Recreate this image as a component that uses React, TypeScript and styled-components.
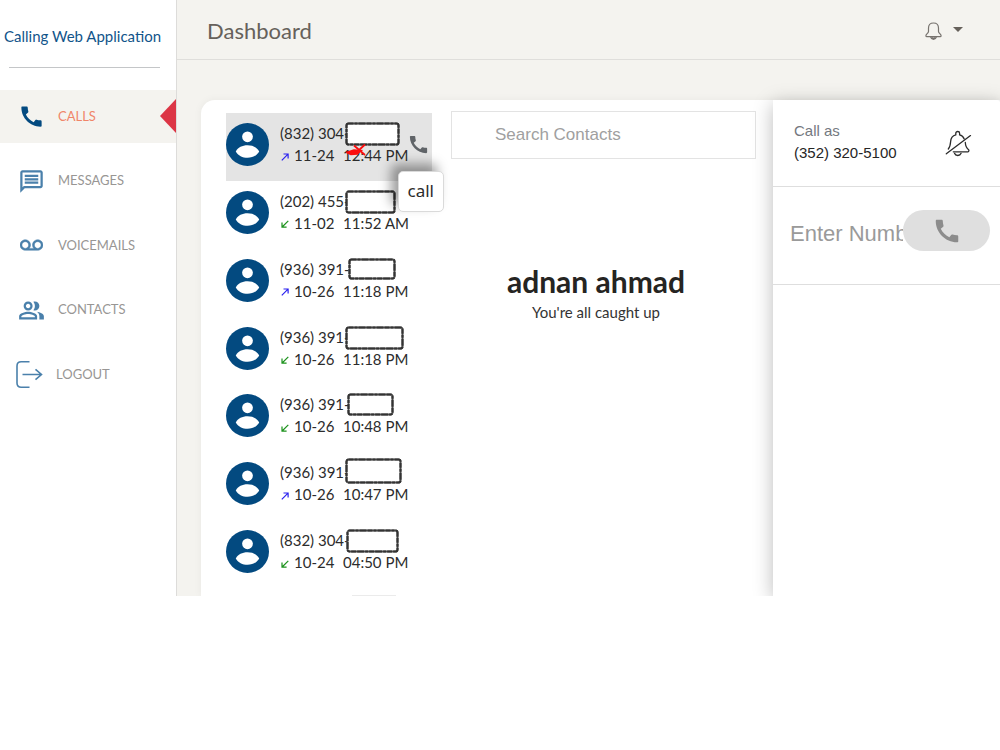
import React from "react";
import styled, { createGlobalStyle } from "styled-components";

const GlobalStyle = createGlobalStyle`
  *, *::before, *::after { box-sizing: border-box; }
  body {
    margin: 0;
    background: #fff;
    color: #252422;
    font-family: Lato, "Liberation Sans", sans-serif;
    font-size: 15px;
  }
  h1, h2, p, ul { margin: 0; padding: 0; }
  ul { list-style: none; }
  svg { display: block; flex-shrink: 0; }
  button, input { font: inherit; border: 0; padding: 0; margin: 0; background: none; }
`;

const Shell = styled.div`
  display: flex;
`;

const Sidebar = styled.aside`
  width: 177px;
  flex-shrink: 0;
  border-right: 1px solid #dddcda;
`;

const Brand = styled.a`
  display: block;
  padding: 24px 0 0 4px;
  height: 67px;
  line-height: 24px;
  color: #11548a;
  text-decoration: none;
  white-space: nowrap;
`;

const Divider = styled.div`
  height: 1px;
  margin: 0 16px 22px 9px;
  background: #c4c6c8;
`;

const Nav = styled.nav`
  display: flex;
  flex-direction: column;
  justify-content: space-between;
  height: 311px;
`;

const NavLink = styled.a<{ $active?: boolean; $wide?: boolean }>`
  position: relative;
  display: flex;
  align-items: center;
  gap: ${(p) => (p.$wide ? 12 : 14)}px;
  height: 53px;
  padding-left: ${(p) => (p.$wide ? 15 : 18)}px;
  background: ${(p) => (p.$active ? "#f4f3ef" : "transparent")};
  color: ${(p) => (p.$active ? "#f08568" : "#989694")};
  font-size: 13px;
  line-height: 20px;
  text-decoration: none;

  svg {
    color: ${(p) => (p.$active ? "#034a80" : "#4a80ab")};
  }

  &::after {
    content: "";
    display: ${(p) => (p.$active ? "block" : "none")};
    position: absolute;
    right: 0;
    top: 9px;
    border: 17px solid transparent;
    border-left-width: 0;
    border-right: 16px solid #dc3545;
  }
`;

const NavIcon = styled.span`
  display: flex;
  justify-content: center;
  width: 26px;
`;

const NavLabel = styled.span`
  padding-bottom: 2px;
`;

const Content = styled.div`
  flex: 1;
  min-width: 0;
  background: #f4f3ef;
  overflow: hidden;
`;

const TopBar = styled.header`
  display: flex;
  align-items: center;
  justify-content: space-between;
  height: 60px;
  padding: 2px 37px 0 30px;
  border-bottom: 1px solid #dfdedb;
`;

const PageTitle = styled.h1`
  font-size: 22px;
  font-weight: 400;
  line-height: 30px;
  color: #66615b;
`;

const AlertsButton = styled.button`
  display: flex;
  align-items: center;
  gap: 11px;
  color: #66615b;
`;

const Caret = styled.span`
  margin-bottom: 2px;
  border: 5px solid transparent;
  border-top-color: #66615b;
  border-bottom-width: 0;
`;

const Card = styled.main`
  display: flex;
  margin: 40px 0 0 24px;
  background: #fff;
  border-radius: 14px 0 0 0;
  box-shadow: 0 0 8px rgba(0, 0, 0, 0.05);
`;

const CallColumn = styled.section`
  width: 250px;
  flex-shrink: 0;
  padding: 13px 19px 0 25px;
`;

const CallList = styled.ul`
  display: flex;
  flex-direction: column;
  height: 475px;
`;

const CallRow = styled.li<{ $selected?: boolean }>`
  position: relative;
  flex: 1;
  display: flex;
  align-items: flex-start;
  gap: 11px;
  padding-top: 10px;
  background: ${(p) => (p.$selected ? "#e4e4e4" : "transparent")};
`;

const CallText = styled.div`
  position: relative;
  line-height: 22px;
  margin-top: -1px;
  white-space: pre;
  color: #2c2c2c;
`;

const CallMeta = styled.p`
  display: flex;
  align-items: center;

  svg { margin: 3px 5px 0 1px; }
  time { width: 49px; }
`;

const Redaction = styled.svg<{ $x: number; $y: number }>`
  position: absolute;
  left: ${(p) => p.$x}px;
  top: ${(p) => p.$y}px;
`;

const Scribble = styled.svg`
  position: absolute;
  left: 66px;
  top: 21px;
`;

const RowCallButton = styled.button`
  position: absolute;
  right: 2px;
  top: 20px;
  color: #606468;
`;

const Tooltip = styled.span`
  position: absolute;
  z-index: 2;
  right: -12px;
  top: 58px;
  padding: 5px 9px 6px;
  background: #fff;
  border: 1px solid #dadada;
  border-radius: 5px;
  box-shadow: -7px -7px 12px rgba(0, 0, 0, 0.38);
  color: #2b2b2b;
  font-family: "Noto Sans", sans-serif;
  font-size: 17px;
  line-height: 28px;
`;

const NextRowEdge = styled.div`
  height: 1px;
  width: 44px;
  margin: 7px 0 0 126px;
  background: #ebebeb;
`;

const Center = styled.section`
  flex: 1;
  min-width: 0;
  padding: 11px 17px 0 0;
  text-align: center;
`;

const SearchInput = styled.input`
  display: block;
  width: 100%;
  height: 48px;
  padding-left: 43px;
  border: 1px solid #e3e3e3;
  background: #fff;
  font-family: "Liberation Sans", Arial, sans-serif;
  font-size: 17px;

  &::placeholder { color: #a0a0a0; opacity: 1; }
`;

const UserProfile = styled.div`
  padding: 103px 15px 0 0;
`;

const UserName = styled.h2`
  font-size: 30px;
  line-height: 38px;
  font-weight: 700;
`;

const Caption = styled.p`
  margin-top: 1px;
  line-height: 22px;
  color: #333;
`;

const Dialer = styled.section`
  width: 227px;
  flex-shrink: 0;
  background: #fff;
  box-shadow: 0 4px 20px rgba(0, 0, 0, 0.27);
  border-top-right-radius: 3px;
  font-family: "Liberation Sans", Arial, sans-serif;
`;

const CallerBar = styled.div`
  display: flex;
  align-items: center;
  justify-content: space-between;
  height: 87px;
  padding: 0 28px 0 21px;
  border-bottom: 1px solid #dedede;
  line-height: 22px;
`;

const CallerText = styled.div`
  padding-bottom: 2px;
`;

const CallerLabel = styled.p`
  color: #747880;
`;

const CallerNumber = styled.p`
  color: #262626;
`;

const DialForm = styled.form`
  display: flex;
  align-items: center;
  height: 98px;
  padding: 0 10px 10px 17px;
  border-bottom: 1px solid #dedede;
`;

const NumberInput = styled.input`
  flex: 1;
  min-width: 0;
  height: 40px;
  margin-top: 7px;
  font-size: 22px;

  &::placeholder { color: #9a9a9a; opacity: 1; }
`;

const DialButton = styled.button`
  display: flex;
  align-items: center;
  justify-content: center;
  width: 87px;
  height: 41px;
  border-radius: 21px;
  background: #dfdfdf;
  color: #8c8c8c;
`;

const Phone = ({ size }: { size: number }) => (
  <svg width={size} height={size} viewBox="0 0 24 24" fill="currentColor" aria-hidden="true">
    <path d="M20.01 15.38c-1.23 0-2.42-.2-3.53-.56a.977.977 0 0 0-1.01.24l-1.57 1.97c-2.83-1.35-5.48-3.9-6.89-6.83l1.95-1.66c.27-.28.35-.67.24-1.02-.37-1.110-.56-2.300-.56-3.530 0-.54-.45-.99-.99-.99H3.800c-.5 0-.8.300-.8.990C3 13.280 10.730 21 20.010 21c.710 0 .990-.300.990-.800v-3.830c0-.54-.45-.99-.99-.99z" />
  </svg>
);

const MessageIcon = () => (
  <svg width="27" height="27" viewBox="0 0 24 24" fill="currentColor" aria-hidden="true">
    <path d="M4 4h16v12H5.17L4 17.17V4m0-2c-1.1 0-1.99.9-1.99 2L2 22l4-4h14c1.1 0 2-.9 2-2V4c0-1.1-.9-2-2-2H4zm2 10h12v2H6v-2zm0-3h12v2H6V9zm0-3h12v2H6V6z" />
  </svg>
);

const VoicemailIcon = () => (
  <svg width="23" height="23" viewBox="0 0 24 24" fill="currentColor" stroke="currentColor" strokeWidth="0.5" aria-hidden="true">
    <path d="M18.5 6C15.46 6 13 8.46 13 11.5c0 1.33.47 2.55 1.26 3.5H9.74c.79-.95 1.26-2.17 1.26-3.5C11 8.46 8.54 6 5.5 6S0 8.46 0 11.5 2.46 17 5.5 17h13c3.04 0 5.5-2.46 5.5-5.5S21.54 6 18.5 6zm-13 9C3.57 15 2 13.43 2 11.5S3.57 8 5.5 8 9 9.57 9 11.5 7.43 15 5.5 15zm13 0c-1.93 0-3.5-1.57-3.5-3.5S16.57 8 18.5 8 22 9.57 22 11.5 20.43 15 18.5 15z" />
  </svg>
);

const ContactsIcon = () => (
  <svg width="27" height="27" viewBox="0 0 24 24" fill="currentColor" aria-hidden="true">
    <path d="M16.67 13.13C18.04 14.06 19 15.32 19 17v3h4v-3c0-2.18-3.57-3.47-6.33-3.87z" />
    <path d="M15 12c2.21 0 4-1.79 4-4s-1.79-4-4-4c-.47 0-.91.1-1.33.24C14.5 5.27 15 6.58 15 8s-.5 2.73-1.33 3.76c.42.14.86.24 1.33.24z" />
    <path d="M9 12c2.21 0 4-1.79 4-4s-1.79-4-4-4-4 1.79-4 4 1.79 4 4 4zm0-6c1.1 0 2 .9 2 2s-.9 2-2 2-2-.9-2-2 .9-2 2-2zM9 13c-2.67 0-8 1.34-8 4v3h16v-3c0-2.66-5.33-4-8-4zm6 5H3v-.99C3.2 16.29 6.3 15 9 15s5.8 1.29 6 2v1z" />
  </svg>
);

const LogoutIcon = () => (
  <svg width="29" height="29" viewBox="0 0 29 29" fill="none" stroke="currentColor" strokeWidth="1.6" aria-hidden="true">
    <path d="M14.5 1.8H6.2c-2.5 0-4.2 1.8-4.2 4.2v17c0 2.4 1.7 4.2 4.2 4.2h8.3M7.5 14.500h18.7M20.5 9.300l6 5.200-6 5.200" />
  </svg>
);

const BellIcon = () => (
  <svg width="17" height="18" viewBox="0 0 17 18" fill="none" stroke="#77736f" strokeWidth="1.2" aria-hidden="true">
    <path d="M8.5 1C5.3 1 3.500 3.300 3.500 6v3.500c0 1.700-2.600 2.600-2.600 4.200 0 .6.400.9 1 .9h13.200c.6 0 1-.3 1-.9 0-1.600-2.600-2.500-2.600-4.200V6c0-2.700-1.800-5-5-5z" />
    <path d="M5.600 15c.5 1.500 1.500 2.300 2.900 2.300s2.400-.8 2.900-2.300M7 15.200c.3.600.8.900 1.500.9s1.200-.3 1.500-.9" />
  </svg>
);

const MutedBellIcon = () => (
  <svg width="27" height="28" viewBox="0 0 27 28" fill="none" stroke="#2b2b2b" strokeWidth="1.3" strokeLinecap="round" aria-hidden="true">
    <path d="M3.300 20c1.800-2 2.100-4.400 2.300-7.300.2-3.600 2.100-6.200 5.200-6.900V4.200c0-1 .8-1.700 1.900-1.700s1.900.7 1.900 1.700v1.600c2.200.5 3.800 2 4.600 4.100M20.300 13.500c.2 3.300.8 5.300 3.300 7.200.6.500.3 2.100-.6 2.100H8.300" />
    <path d="M9.500 24.300c.5 1.400 1.700 2.200 3.300 2.200s2.700-.8 3.300-2.200M1.300 24.800 25.500 6.600" />
  </svg>
);

const Avatar = () => (
  <svg width="43" height="43" viewBox="2 2 20 20" aria-hidden="true">
    <circle cx="12" cy="12" r="10" fill="#034a80" />
    <circle cx="12" cy="8.4" r="2.5" fill="#fff" />
    <path d="M6.550 15.200C7.500 13.400 9.600 12.400 12 12.400s4.500 1 5.450 2.800C16.400 17.100 14.300 18.150 12 18.150S7.600 17.100 6.550 15.200z" fill="#fff" />
  </svg>
);

const DirectionArrow = ({ outgoing }: { outgoing: boolean }) => (
  <svg width="8" height="8" viewBox="0 0 8 8" fill="none" stroke={outgoing ? "#2a20f0" : "#1c921c"} strokeWidth="1.2" role="img" aria-label={outgoing ? "Outgoing" : "Incoming"}>
    <path d={outgoing ? "M.8 7.300 7 1.100M2.500 1h4.600v4.600" : "M7.300.8 1.100 7M1 2.500v4.600h4.600"} />
  </svg>
);

interface Call {
  number: string;
  date: string;
  time: string;
  outgoing: boolean;
  mask: { x: number; y: number; w: number; h: number };
}

const calls: Call[] = [
  { number: "(832) 304-", date: "11-24", time: "12:44 PM", outgoing: true, mask: { x: 65, y: 0, w: 55, h: 24 } },
  { number: "(202) 455-", date: "11-02", time: "11:52 AM", outgoing: false, mask: { x: 65, y: 0, w: 51, h: 24 } },
  { number: "(936) 391-", date: "10-26", time: "11:18 PM", outgoing: true, mask: { x: 68, y: 0, w: 48, h: 22 } },
  { number: "(936) 391-", date: "10-26", time: "11:18 PM", outgoing: false, mask: { x: 65, y: 0, w: 59, h: 24 } },
  { number: "(936) 391-", date: "10-26", time: "10:48 PM", outgoing: false, mask: { x: 67, y: 0, w: 47, h: 23 } },
  { number: "(936) 391-", date: "10-26", time: "10:47 PM", outgoing: true, mask: { x: 65, y: -3, w: 57, h: 26 } },
  { number: "(832) 304-", date: "10-24", time: "04:50 PM", outgoing: false, mask: { x: 66, y: 0, w: 53, h: 24 } },
];

const Mask = ({ x, y, w, h }: Call["mask"]) => (
  <Redaction $x={x} $y={y} width={w} height={h} aria-hidden="true">
    <rect x="1.5" y="1.5" width={w - 3} height={h - 3} rx="2" fill="#fff" stroke="#555" strokeWidth="1.8" />
    <rect x="1.5" y="1.5" width={w - 3} height={h - 3} rx="2" fill="none" stroke="#333" strokeWidth="2.2" strokeDasharray="5 1 3 1 7 1" />
  </Redaction>
);

const navItems = [
  { label: "CALLS", icon: <Phone size={27} />, active: true },
  { label: "MESSAGES", icon: <MessageIcon /> },
  { label: "VOICEMAILS", icon: <VoicemailIcon /> },
  { label: "CONTACTS", icon: <ContactsIcon /> },
  { label: "LOGOUT", icon: <LogoutIcon />, wide: true },
];

export default function App() {
  return (
    <>
      <GlobalStyle />
      <Shell>
        <Sidebar>
          <Brand href="#">Calling Web Application</Brand>
          <Divider />
          <Nav>
            {navItems.map((item) => (
              <NavLink key={item.label} href="#" $active={item.active} $wide={item.wide}>
                {item.wide ? item.icon : <NavIcon>{item.icon}</NavIcon>}
                <NavLabel>{item.label}</NavLabel>
              </NavLink>
            ))}
          </Nav>
        </Sidebar>
        <Content>
          <TopBar>
            <PageTitle>Dashboard</PageTitle>
            <AlertsButton aria-label="Notifications">
              <BellIcon />
              <Caret />
            </AlertsButton>
          </TopBar>
          <Card>
            <CallColumn>
              <CallList>
                {calls.map((call, i) => (
                  <CallRow key={i} $selected={i === 0}>
                    <Avatar />
                    <CallText>
                      <p>{call.number}</p>
                      <CallMeta>
                        <DirectionArrow outgoing={call.outgoing} />
                        <time>{call.date}</time>
                        <span>{call.time}</span>
                      </CallMeta>
                      <Mask {...call.mask} />
                      {i === 0 && (
                        <Scribble width="22" height="14" fill="none" stroke="#fb0d0d" aria-hidden="true">
                          <path d="M2 9.500 8 7.500 14 8l-3 2.500-6 .5z" strokeWidth="2.5" fill="#fb0d0d" />
                          <path d="M8 2.500 19 12M19 1.500 12 8" strokeWidth="1.8" />
                        </Scribble>
                      )}
                    </CallText>
                    {i === 0 && (
                      <>
                        <RowCallButton aria-label="Call">
                          <Phone size={23} />
                        </RowCallButton>
                        <Tooltip role="tooltip">call</Tooltip>
                      </>
                    )}
                  </CallRow>
                ))}
              </CallList>
              <NextRowEdge />
            </CallColumn>
            <Center>
              <SearchInput type="text" placeholder="Search Contacts" aria-label="Search Contacts" />
              <UserProfile>
                <UserName>adnan ahmad</UserName>
                <Caption>You're all caught up</Caption>
              </UserProfile>
            </Center>
            <Dialer>
              <CallerBar>
                <CallerText>
                  <CallerLabel>Call as</CallerLabel>
                  <CallerNumber>(352) 320-5100</CallerNumber>
                </CallerText>
                <MutedBellIcon />
              </CallerBar>
              <DialForm>
                <NumberInput type="tel" placeholder="Enter Number" aria-label="Enter Number" />
                <DialButton type="button" aria-label="Dial">
                  <Phone size={30} />
                </DialButton>
              </DialForm>
            </Dialer>
          </Card>
        </Content>
      </Shell>
    </>
  );
}
